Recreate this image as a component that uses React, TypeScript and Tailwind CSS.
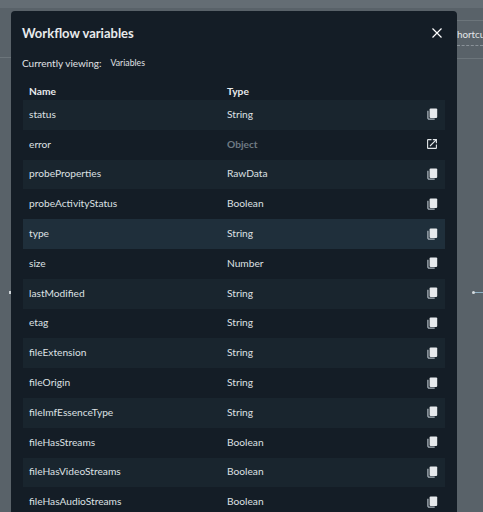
const rows: [string, string][] = [
  ["status", "String"],
  ["error", "Object"],
  ["probeProperties", "RawData"],
  ["probeActivityStatus", "Boolean"],
  ["type", "String"],
  ["size", "Number"],
  ["lastModified", "String"],
  ["etag", "String"],
  ["fileExtension", "String"],
  ["fileOrigin", "String"],
  ["fileImfEssenceType", "String"],
  ["fileHasStreams", "Boolean"],
  ["fileHasVideoStreams", "Boolean"],
  ["fileHasAudioStreams", "Boolean"],
];

function CopyIcon() {
  return (
    <svg width="11" height="12" viewBox="0 0 11 12" fill="none">
      <path d="M.9 2.8V10a1.2 1.2 0 0 0 1.2 1.2h5.6" stroke="#a9b3bb" strokeWidth="1.3" />
      <rect x="2.6" y="0.6" width="7.6" height="9.4" rx="1" fill="#e6e9ec" />
    </svg>
  );
}

function OpenIcon() {
  return (
    <svg width="10" height="10" viewBox="0 0 10 10" fill="none" stroke="#e2e6e9" strokeWidth="1.1">
      <path d="M4.5.6H1.1a.5.5 0 0 0-.5.5v7.8c0 .3.2.5.5.5h7.8c.3 0 .5-.2.5-.5V5.5" />
      <path d="M3 7 8.9 1.1M5.8.6h3.6v3.6" />
    </svg>
  );
}

export default function App() {
  return (
    <div className="h-[512px] w-[483px] overflow-hidden bg-[#596269] font-['Lato',sans-serif] flex flex-col">
      <div className="h-[8px] shrink-0 bg-[#646d74]" />
      <div className="flex flex-1 min-h-0">
        <div className="relative w-[11px] shrink-0">
          <div className="mt-[49px] h-px bg-[#6c757b]" />
          <span className="absolute left-[9px] top-[283px] h-[3px] w-[2px] bg-[#cfd5d9]" />
        </div>
        <div className="mt-[3px] w-[446px] shrink-0 rounded-t-[4px] bg-[#141d26] px-[12px] pt-[11px]">
          <div className="flex h-[22px] items-center justify-between pr-[3px]">
            <span className="-ml-px pt-[2px] text-[13px] font-bold text-[#e8eaec]">Workflow variables</span>
            <svg width="10" height="10" viewBox="0 0 10 10" stroke="#ffffff" strokeWidth="1.2">
              <path d="M.5.5l9 9M9.5.5l-9 9" />
            </svg>
          </div>
          <div className="-ml-px mt-[10px] flex h-[18px] items-center text-[10px] text-[#e0e3e6]">
            <span>Currently viewing:</span>
            <span className="ml-[9px] text-[8.7px]">Variables</span>
          </div>
          <div className="mt-[12px] flex h-[16px] items-center pl-[6px] text-[10.2px] font-bold text-[#e8eaec]">
            <span className="w-[198px]">Name</span>
            <span>Type</span>
          </div>
          <div className="w-[422px]">
            {rows.map(([name, type], i) => (
              <div
                key={name}
                className={`flex h-[29.8px] items-center pb-px pl-[6px] pr-[5px] text-[10.2px] text-[#dde0e3] ${
                  name === "type" ? "bg-[#1f2f3b]" : i % 2 === 0 ? "bg-[#19252e]" : ""
                }`}
              >
                <span className="w-[198px]">{name}</span>
                <span className={`flex-1 ${type === "Object" ? "font-bold text-[#6f7a83]" : ""}`}>{type}</span>
                <span className="flex w-[16px] justify-center">
                  {type === "Object" ? <OpenIcon /> : <CopyIcon />}
                </span>
              </div>
            ))}
          </div>
        </div>
        <div className="flex-1 min-w-0 overflow-hidden">
          <div className="mt-[12px] h-px bg-[#6c757b]" />
          <div className="mt-[6px] whitespace-nowrap text-[9.8px] leading-[15px] text-[#e3e6e8]">hortcu</div>
          <div className="mt-[3px] border-t border-dashed border-[#8a9299]" />
          <div className="mt-[12px] h-px bg-[#6c757b]" />
          <div className="relative mt-[233px] h-px">
            <span className="absolute left-[17px] top-0 h-[1px] w-[10px] bg-[#8fb0c4]" />
            <span className="absolute left-[15px] top-[-1px] h-[3px] w-[3px] rounded-full bg-[#d5dade]" />
          </div>
        </div>
      </div>
    </div>
  );
}
